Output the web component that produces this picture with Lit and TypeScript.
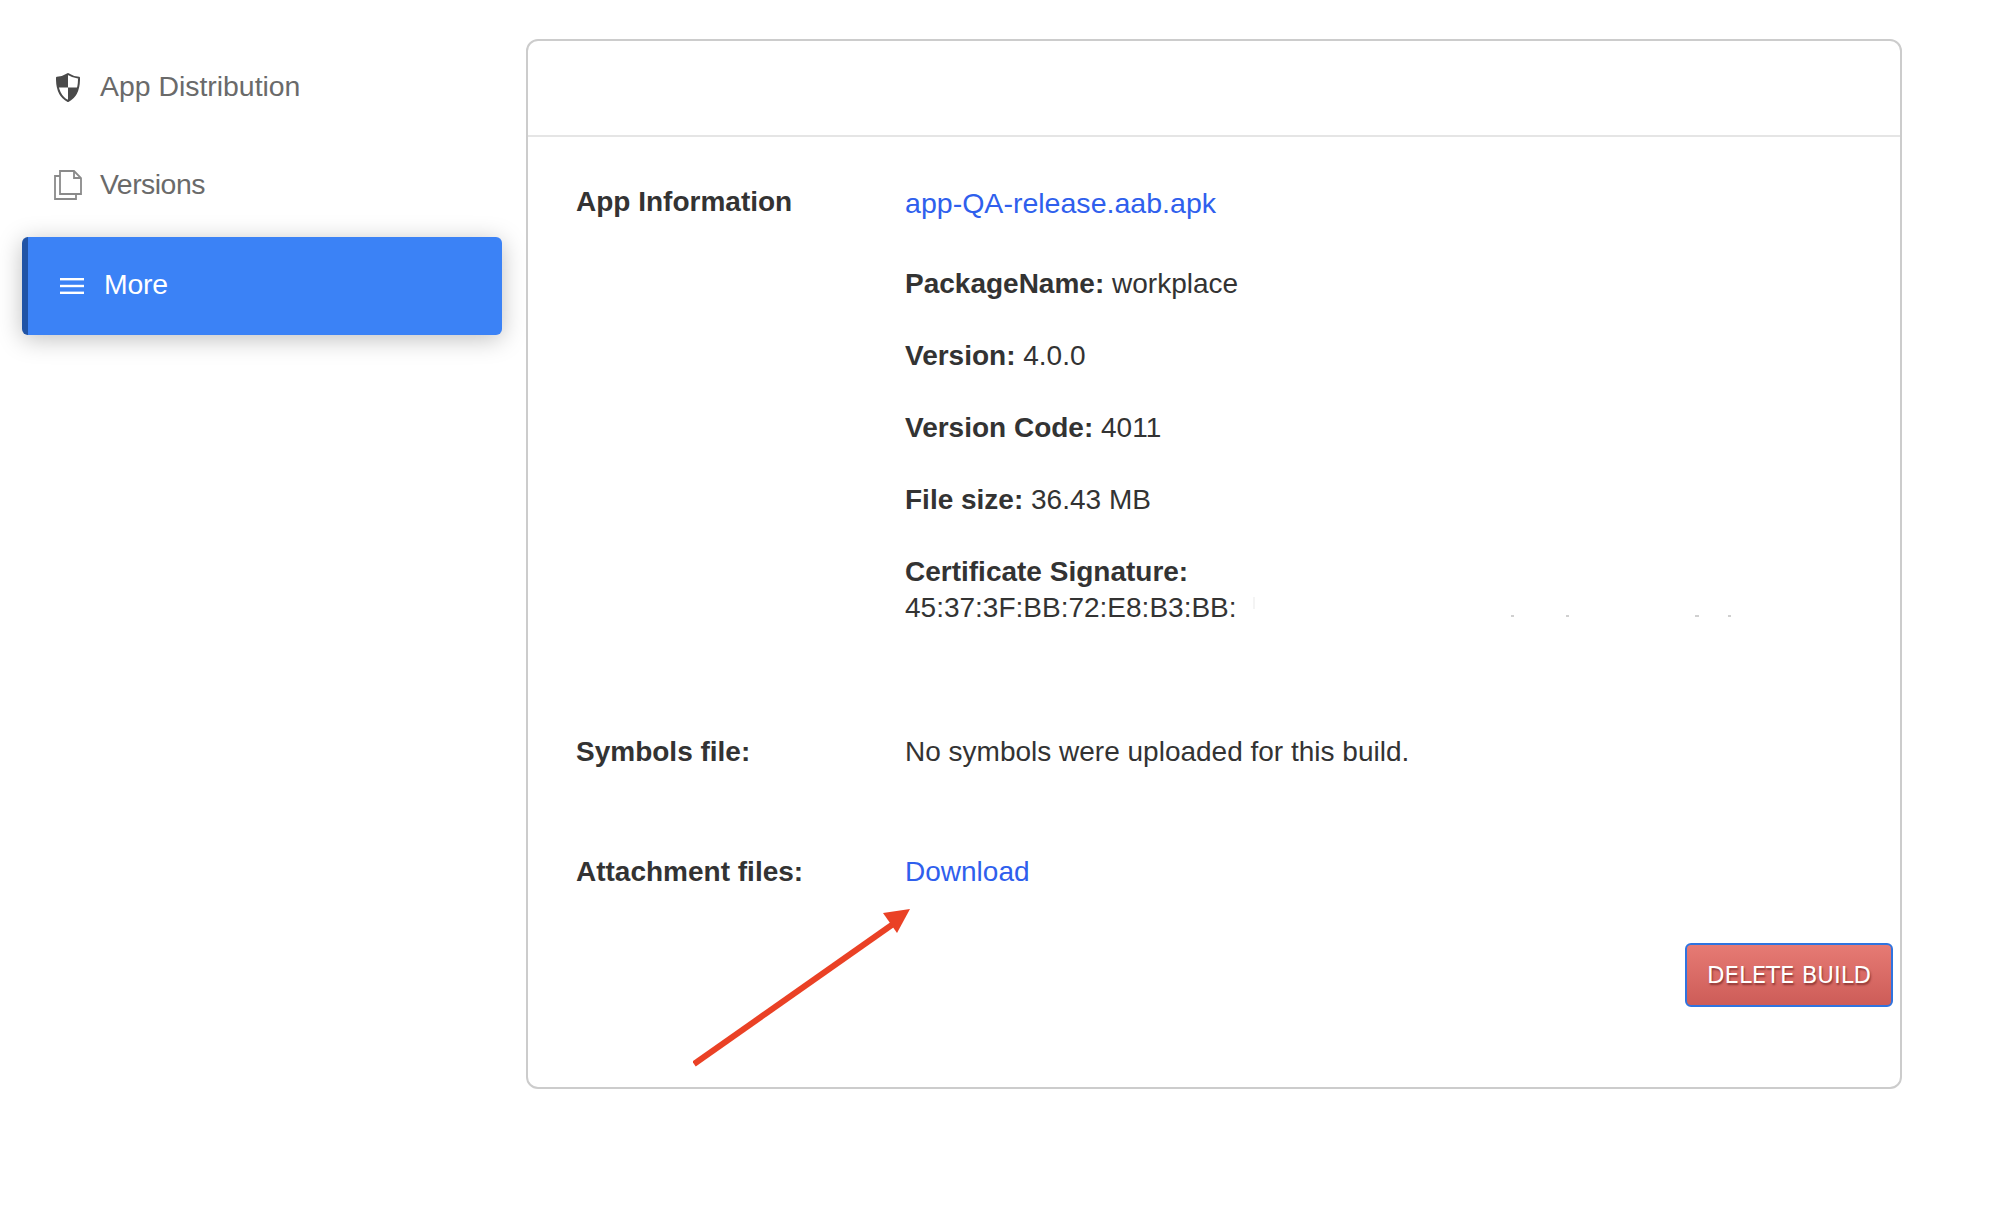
import { LitElement, html, css, svg } from "lit";
import { customElement } from "lit/decorators.js";

@customElement("app-root")
export class AppRoot extends LitElement {
  static styles = css`
    :host {
      display: block;
      width: 2002px;
      height: 1226px;
      background: #fff;
      font-family: "Liberation Sans", Arial, sans-serif;
      color: #333;
      overflow: hidden;
    }
    .page {
      display: flex;
      align-items: flex-start;
      padding: 37px 0 0 22px;
      gap: 24px;
    }
    .side {
      width: 480px;
      flex: none;
      display: flex;
      flex-direction: column;
    }
    .item {
      display: flex;
      align-items: center;
      height: 98px;
      font-size: 28.4px;
      color: #6a6a6a;
      box-sizing: border-box;
      padding-left: 32px;
      gap: 18px;
    }
    .item.active {
      margin-top: 4px;
      background: #3b82f6;
      color: #fff;
      border-left: 6px solid #2154a6;
      border-radius: 6px;
      padding: 0 0 4px 32px;
      gap: 20px;
      box-shadow: 0 4px 24px rgba(0, 0, 0, 0.25);
    }
    .item.active svg {
      margin-top: 4px;
    }
    .item.active span {
      letter-spacing: -0.2px;
    }
    .ico {
      width: 28px;
      flex: none;
      display: flex;
      justify-content: center;
      padding-top: 2px;
    }
    .item svg {
      display: block;
      flex: none;
    }
    .tight {
      letter-spacing: -0.5px;
    }
    .card {
      position: relative;
      margin-top: 2px;
      width: 1376px;
      height: 1050px;
      box-sizing: border-box;
      border: 2px solid #ccc;
      border-radius: 12px;
      display: flex;
      flex-direction: column;
    }
    .head {
      height: 94px;
      border-bottom: 2px solid #e5e5e5;
      flex: none;
    }
    .body {
      padding: 47px 7px 0 48px;
      font-size: 28px;
      line-height: 36px;
    }
    .row {
      display: grid;
      grid-template-columns: 329px 1fr;
    }
    .row b {
      font-weight: 700;
    }
    .link {
      color: #2f5fed;
      text-decoration: none;
    }
    .apk {
      display: block;
      font-size: 28.55px;
      padding-top: 1px;
    }
    .details {
      margin-top: 45px;
    }
    .details p {
      margin: 0 0 36px;
    }
    .symbols {
      margin-top: 72px;
    }
    .attach {
      margin-top: 84px;
    }
    .actions {
      display: flex;
      justify-content: flex-end;
      margin-top: 53px;
    }
    .del {
      width: 208px;
      height: 64px;
      box-sizing: border-box;
      border: 2px solid #2f74e0;
      border-radius: 6px;
      background: linear-gradient(#e67a74, #cd5c58);
      color: #fff;
      font-family: "DejaVu Sans", sans-serif;
      font-size: 22.8px;
      padding: 0;
      text-shadow: 1px 2px 2px rgba(90, 20, 20, 0.6);
    }
    .arrow {
      position: absolute;
      left: 165px;
      top: 868px;
    }
    .specks {
      position: absolute;
      left: 720px;
      top: 553px;
    }
  `;

  render() {
    return html`
      <div class="page">
        <nav class="side">
          <div class="item">
            <span class="ico">
              <svg width="24" height="29" viewBox="0 0 24 29">
                <path
                  d="M12 1 C9 3 5 4.4 1 4.7 C0.8 15 3 23.5 12 28 C21 23.5 23.2 15 23 4.7 C19 4.4 15 3 12 1 Z"
                  fill="#fff"
                  stroke="#4a4a4a"
                  stroke-width="2"
                  stroke-linejoin="round"
                />
                <path d="M12 1 C9 3 5 4.4 1 4.7 C0.9 8 1.1 11.5 2 14.5 H12 Z" fill="#4a4a4a" />
                <path d="M12 14.5 H22 C20.5 20.5 17.5 25 12 28 Z" fill="#4a4a4a" />
              </svg>
            </span>
            <span>App Distribution</span>
          </div>
          <div class="item">
            <span class="ico">
              <svg width="28" height="30" viewBox="0 0 28 30" fill="#fff" stroke="#8a8a8a" stroke-width="1.8">
                <path d="M6 6 H1 V29 H22 V24" fill="none" />
                <path d="M6 1 H20 L27 8 V24 H6 Z" />
                <path d="M20 1 V8 H27" fill="none" />
              </svg>
            </span>
            <span class="tight">Versions</span>
          </div>
          <div class="item active">
            <svg width="24" height="16" viewBox="0 0 24 16" fill="#fff">
              <rect y="0" width="24" height="2.4" />
              <rect y="6.8" width="24" height="2.4" />
              <rect y="13.6" width="24" height="2.4" />
            </svg>
            <span>More</span>
          </div>
        </nav>
        <section class="card">
          <div class="head"></div>
          <div class="body">
            <div class="row">
              <b>App Information</b>
              <div>
                <a class="link apk" href="#">app-QA-release.aab.apk</a>
                <div class="details">
                  <p><b>PackageName:</b> workplace</p>
                  <p><b>Version:</b> 4.0.0</p>
                  <p><b>Version Code:</b> 4011</p>
                  <p><b>File size:</b> 36.43 MB</p>
                  <p><b>Certificate Signature:</b><br />45:37:3F:BB:72:E8:B3:BB:</p>
                </div>
              </div>
            </div>
            <div class="row symbols">
              <b>Symbols file:</b>
              <span>No symbols were uploaded for this build.</span>
            </div>
            <div class="row attach">
              <b>Attachment files:</b>
              <a class="link" href="#">Download</a>
            </div>
            <div class="actions"><button class="del">DELETE BUILD</button></div>
          </div>
          <svg class="specks" width="490" height="30" viewBox="0 0 490 30" fill="#d0d0d0">
            ${svg`<rect x="5" y="3" width="2" height="12" fill="#f4f4f4" />
            <rect x="263" y="21" width="3" height="2" />
            <rect x="318" y="21" width="3" height="2" />
            <rect x="447" y="21" width="4" height="2" />
            <rect x="480" y="21" width="3" height="2" />`}
          </svg>
          <svg class="arrow" width="225" height="165" viewBox="0 0 225 165">
            ${svg`<line x1="1" y1="155" x2="203" y2="13" stroke="#ea4125" stroke-width="6" />
            <polygon points="217,0 190,4 204,24" fill="#ea4125" />`}
          </svg>
        </section>
      </div>
    `;
  }
}
